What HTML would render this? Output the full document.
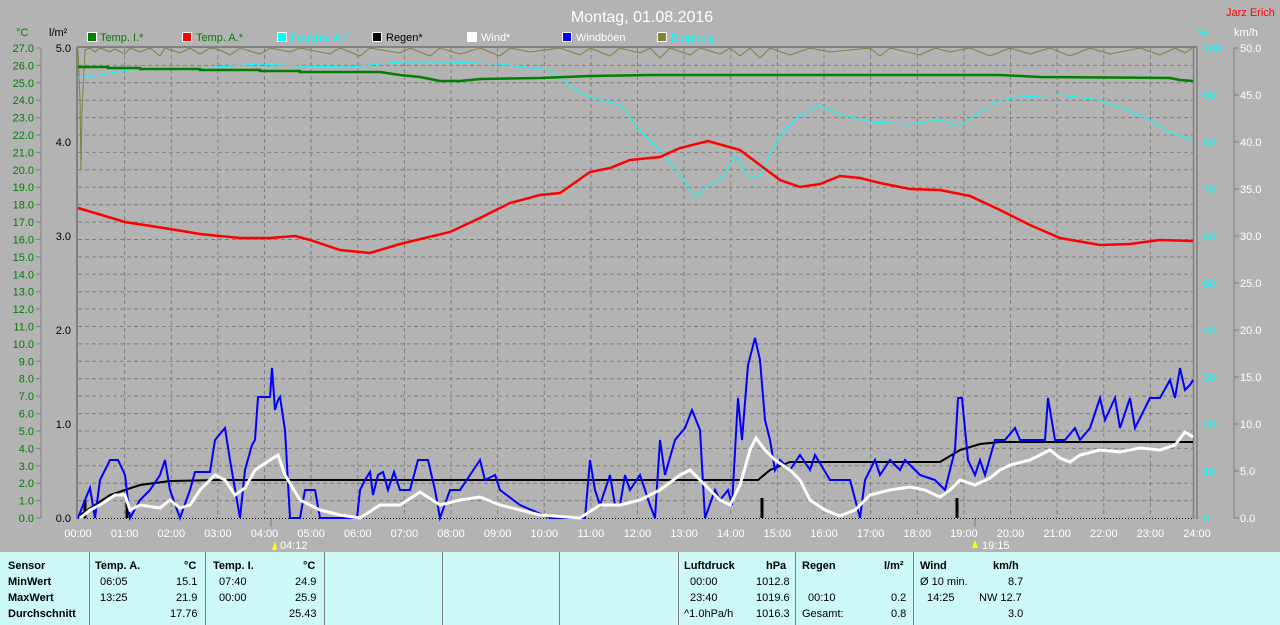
<!DOCTYPE html>
<html><head><meta charset="utf-8"><style>
html,body{margin:0;padding:0;background:#b3b3b3;width:1280px;height:625px;overflow:hidden}
svg{display:block;font-family:"Liberation Sans",sans-serif;font-size:11px}
.tb{position:absolute;left:0;top:552px;width:1280px;height:73px;background:#ccf8f5;font-family:"Liberation Sans",sans-serif;font-size:11px;color:#000}
.tb div{position:absolute;white-space:nowrap}
.b{font-weight:bold}
.sep{position:absolute;top:0;width:1px;height:73px;background:#808080}
</style></head><body>
<svg width="1280" height="552" viewBox="0 0 1280 552">
<rect width="1280" height="552" fill="#b3b3b3"/>
<text x="642" y="22" fill="#fff" font-size="16" text-anchor="middle">Montag, 01.08.2016</text>
<text x="1226" y="16" fill="#f00">Jarz Erich</text>
<!-- legend -->
<g font-size="11">
<rect x="87.5" y="32.5" width="9" height="9" fill="#008000" stroke="#fff"/><text x="100" y="41" fill="#008000">Temp. I.*</text>
<rect x="182.5" y="32.5" width="9" height="9" fill="#f00" stroke="#fff"/><text x="196" y="41" fill="#008000">Temp. A.*</text>
<rect x="277.5" y="32.5" width="9" height="9" fill="#0ff" stroke="#fff"/><text x="291" y="41" fill="#0ff">Feuchte A.*</text>
<rect x="372.5" y="32.5" width="9" height="9" fill="#000" stroke="#fff"/><text x="386" y="41" fill="#000">Regen*</text>
<rect x="467.5" y="32.5" width="9" height="9" fill="#fff" stroke="#fff"/><text x="481" y="41" fill="#fff">Wind*</text>
<rect x="562.5" y="32.5" width="9" height="9" fill="#00f" stroke="#fff"/><text x="576" y="41" fill="#fff">Windböen</text>
<rect x="657.5" y="32.5" width="9" height="9" fill="#808040" stroke="#fff"/><text x="671" y="41" fill="#0ff">Empfang</text>
</g>
<text x="16" y="36" fill="#008000">°C</text>
<text x="49" y="36" fill="#000">l/m²</text>
<text x="1198" y="36" fill="#0ff">%</text>
<text x="1234" y="36" fill="#fff">km/h</text>
<!-- grid -->
<g stroke="#808080" stroke-dasharray="4,3" stroke-width="1">
<path d="M78 500.6H1193M78 483.2H1193M78 465.8H1193M78 448.4H1193M78 431H1193M78 413.6H1193M78 396.1H1193M78 378.7H1193M78 361.3H1193M78 343.9H1193M78 326.5H1193M78 309.1H1193M78 291.7H1193M78 274.3H1193M78 256.9H1193M78 239.5H1193M78 222.1H1193M78 204.6H1193M78 187.2H1193M78 169.8H1193M78 152.4H1193M78 135H1193M78 117.6H1193M78 100.2H1193M78 82.8H1193M78 65.4H1193"/>
<path d="M124.6 48V518M171.3 48V518M217.9 48V518M264.5 48V518M311.1 48V518M357.8 48V518M404.4 48V518M451 48V518M497.6 48V518M544.3 48V518M590.9 48V518M637.5 48V518M684.1 48V518M730.8 48V518M777.4 48V518M824 48V518M870.6 48V518M917.3 48V518M963.9 48V518M1010.5 48V518M1057.1 48V518M1103.8 48V518M1150.4 48V518"/>
</g>
<!-- frame -->
<g stroke="#808080" fill="none">
<path d="M77 47H1197" stroke-width="2"/>
<path d="M77 47V519" stroke-width="2"/>
<path d="M1193.5 47V519M1197 47V519" stroke-width="1.5"/>
<path d="M41 48V518M36 48H41M36 65.4H41M36 82.8H41M36 100.2H41M36 117.6H41M36 135H41M36 152.4H41M36 169.8H41M36 187.2H41M36 204.6H41M36 222.1H41M36 239.5H41M36 256.9H41M36 274.3H41M36 291.7H41M36 309.1H41M36 326.5H41M36 343.9H41M36 361.3H41M36 378.7H41M36 396.1H41M36 413.6H41M36 431H41M36 448.4H41M36 465.8H41M36 483.2H41M36 500.6H41M36 518H41"/>
<path d="M1234 48V518M1234 48H1239M1234 95H1239M1234 142H1239M1234 189H1239M1234 236H1239M1234 283H1239M1234 330H1239M1234 377H1239M1234 424H1239M1234 471H1239M1234 518H1239"/>
<path d="M271 518V527M975 518V527"/>
</g>
<path d="M78 518.5H1193" stroke="#000" stroke-dasharray="1,2"/>
<!-- left labels -->
<g fill="#008000" text-anchor="end">
<text x="34" y="52">27.0</text><text x="34" y="69.4">26.0</text><text x="34" y="86.8">25.0</text><text x="34" y="104.2">24.0</text><text x="34" y="121.6">23.0</text><text x="34" y="139">22.0</text><text x="34" y="156.4">21.0</text><text x="34" y="173.8">20.0</text><text x="34" y="191.2">19.0</text><text x="34" y="208.6">18.0</text><text x="34" y="226.1">17.0</text><text x="34" y="243.5">16.0</text><text x="34" y="260.9">15.0</text><text x="34" y="278.3">14.0</text><text x="34" y="295.7">13.0</text><text x="34" y="313.1">12.0</text><text x="34" y="330.5">11.0</text><text x="34" y="347.9">10.0</text><text x="34" y="365.3">9.0</text><text x="34" y="382.7">8.0</text><text x="34" y="400.1">7.0</text><text x="34" y="417.6">6.0</text><text x="34" y="435">5.0</text><text x="34" y="452.4">4.0</text><text x="34" y="469.8">3.0</text><text x="34" y="487.2">2.0</text><text x="34" y="504.6">1.0</text><text x="34" y="522">0.0</text>
</g>
<g fill="#000" text-anchor="end">
<text x="71" y="52">5.0</text><text x="71" y="146">4.0</text><text x="71" y="240">3.0</text><text x="71" y="334">2.0</text><text x="71" y="428">1.0</text><text x="71" y="522">0.0</text>
</g>
<g fill="#0ff">
<text x="1203" y="52">100</text><text x="1203" y="99">90</text><text x="1203" y="146">80</text><text x="1203" y="193">70</text><text x="1203" y="240">60</text><text x="1203" y="287">50</text><text x="1203" y="334">40</text><text x="1203" y="381">30</text><text x="1203" y="428">20</text><text x="1203" y="475">10</text><text x="1203" y="522">0</text>
</g>
<g fill="#fff">
<text x="1240" y="52">50.0</text><text x="1240" y="99">45.0</text><text x="1240" y="146">40.0</text><text x="1240" y="193">35.0</text><text x="1240" y="240">30.0</text><text x="1240" y="287">25.0</text><text x="1240" y="334">20.0</text><text x="1240" y="381">15.0</text><text x="1240" y="428">10.0</text><text x="1240" y="475">5.0</text><text x="1240" y="522">0.0</text>
</g>
<g fill="#fff" text-anchor="middle">
<text x="78" y="537">00:00</text><text x="124.6" y="537">01:00</text><text x="171.3" y="537">02:00</text><text x="217.9" y="537">03:00</text><text x="264.5" y="537">04:00</text><text x="311.1" y="537">05:00</text><text x="357.8" y="537">06:00</text><text x="404.4" y="537">07:00</text><text x="451" y="537">08:00</text><text x="497.6" y="537">09:00</text><text x="544.3" y="537">10:00</text><text x="590.9" y="537">11:00</text><text x="637.5" y="537">12:00</text><text x="684.1" y="537">13:00</text><text x="730.8" y="537">14:00</text><text x="777.4" y="537">15:00</text><text x="824" y="537">16:00</text><text x="870.6" y="537">17:00</text><text x="917.3" y="537">18:00</text><text x="963.9" y="537">19:00</text><text x="1010.5" y="537">20:00</text><text x="1057.1" y="537">21:00</text><text x="1103.8" y="537">22:00</text><text x="1150.4" y="537">23:00</text><text x="1197" y="537">24:00</text>
</g>
<text x="280" y="549" fill="#fff">04:12</text>
<path d="M275 541l-3 9h5z" fill="#ff0"/>
<text x="982" y="549" fill="#fff">19:15</text>
<path d="M975 540l-3 8h6z" fill="#ff0"/>
<!-- Empfang -->
<polyline fill="none" stroke="#808040" stroke-width="1" points="78,50 80,100 81,170 82,110 83,90 85,50 90,48 95,52 100,48 110,52 115,49 125,54 130,48 140,52 150,48 160,56 165,48 180,53 190,48 200,54 210,48 220,50 230,55 240,48 260,54 270,48 290,52 300,48 330,54 340,48 360,56 370,48 400,53 410,48 430,56 440,48 460,54 480,48 500,56 510,48 530,52 560,48 580,55 590,48 610,56 620,48 640,53 650,48 660,58 670,48 690,55 700,48 720,54 730,48 740,56 750,48 760,58 770,48 790,55 810,48 830,52 870,48 880,56 890,48 920,55 935,48 950,52 970,48 990,56 1010,48 1030,54 1050,48 1070,56 1090,48 1110,54 1140,48 1160,55 1175,48 1185,53 1192,48"/>
<!-- Feuchte -->
<polyline fill="none" stroke="#0ff" stroke-width="1" points="78,78 100,75 140,68 200,68 260,64 300,66 350,67 400,62 450,62 500,64 550,70 580,93 600,100 620,105 640,130 660,150 680,175 695,197 710,185 725,175 735,155 740,165 750,178 760,175 780,135 800,115 820,106 840,114 870,122 910,124 940,120 960,126 980,112 1000,100 1020,97 1060,95 1100,100 1140,115 1170,132 1193,140"/>
<!-- Temp I -->
<polyline fill="none" stroke="#008000" stroke-width="2.5" points="78,67 108,67 108,68 140,68 140,69 200,69 200,70 260,70 260,71 300,71 300,72 380,72 400,75 420,77 440,81 460,81 480,79 540,78 590,76 650,75 1000,75 1040,77 1170,78 1180,80 1193,81"/>
<!-- Temp A -->
<polyline fill="none" stroke="#f00" stroke-width="2.5" points="78,208 125,222 170,229 200,234 240,238 270,238 295,236 310,240 340,250 370,253 400,244 450,232 480,218 510,203 540,195 560,193 590,172 610,168 630,160 660,157 680,148 708,141 740,150 760,165 780,180 800,187 820,184 840,176 860,178 880,183 910,189 940,190 970,196 1000,210 1030,225 1060,238 1100,245 1130,244 1160,240 1193,241"/>
<!-- Rain bars -->
<g stroke="#000" stroke-width="3"><path d="M85 500V518M127 500V518M762 498V518M957 498V518"/></g>
<!-- Regen cumulative -->
<polyline fill="none" stroke="#000" stroke-width="2" points="80,515 95,505 110,495 125,490 140,485 170,481 220,480 758,480 770,470 790,462 940,462 960,450 980,444 1000,442 1193,442"/>
<!-- Windboeen -->
<polyline fill="none" stroke="#00f" stroke-width="2" points="78,518 85,500 90,488 95,518 100,480 105,470 110,460 118,460 125,475 130,518 140,500 150,490 160,475 165,460 170,490 180,518 190,490 195,472 210,472 215,440 225,428 230,460 240,518 245,470 252,445 255,440 258,397 270,397 272,368 275,410 278,400 280,397 285,430 290,518 300,518 305,490 315,490 320,518 357,518 360,490 365,480 370,472 373,495 378,475 383,472 388,490 394,472 400,490 410,490 418,460 428,460 435,490 440,518 450,490 460,490 470,475 480,460 485,480 495,475 500,490 520,505 550,518 585,518 590,460 595,490 600,505 610,475 615,505 620,505 625,475 630,490 640,475 650,505 655,518 660,440 665,475 675,440 685,428 692,410 700,430 705,518 715,490 720,500 728,490 732,505 738,398 742,440 748,365 755,338 760,360 765,420 770,440 775,470 780,460 790,470 800,455 810,470 815,455 830,480 850,480 860,518 865,480 875,460 880,475 890,460 900,470 905,460 920,475 935,480 945,490 955,450 958,398 962,398 968,460 975,475 980,460 985,475 995,440 1005,440 1015,428 1020,440 1045,440 1048,398 1055,440 1065,440 1075,428 1080,440 1090,428 1100,398 1105,420 1115,398 1120,428 1130,398 1135,428 1150,398 1160,398 1170,380 1175,398 1180,368 1185,390 1190,385 1193,380"/>
<!-- Wind -->
<polyline fill="none" stroke="#fff" stroke-width="3" points="80,518 90,510 100,505 115,495 125,495 130,510 140,505 160,508 170,500 180,508 190,505 200,490 215,475 225,480 235,495 245,488 255,470 270,460 278,455 285,475 300,500 320,510 340,515 360,518 380,505 400,505 420,492 440,505 460,500 480,497 500,505 520,510 540,515 580,518 600,505 620,505 640,500 660,490 680,475 690,470 700,480 720,500 730,505 740,485 750,450 756,438 765,450 775,460 790,470 800,480 810,500 825,510 840,516 855,510 870,495 890,490 910,487 925,490 940,497 950,490 960,480 975,485 990,478 1000,470 1010,465 1030,460 1050,450 1060,458 1070,462 1080,455 1100,450 1120,452 1140,448 1160,450 1175,445 1185,432 1193,437"/>
</svg>
<div class="tb">
<div class="sep" style="left:89px"></div><div class="sep" style="left:205px"></div><div class="sep" style="left:324px"></div><div class="sep" style="left:442px"></div><div class="sep" style="left:559px"></div><div class="sep" style="left:678px"></div><div class="sep" style="left:795px"></div><div class="sep" style="left:913px"></div>
<div class="b" style="left:8px;top:8px">Sensor</div>
<div class="b" style="left:8px;top:24px">MinWert</div>
<div class="b" style="left:8px;top:40px">MaxWert</div>
<div class="b" style="left:8px;top:56px">Durchschnitt</div>
<div class="b" style="left:95px;top:8px">Temp. A.</div><div class="b" style="left:184px;top:8px">°C</div>
<div style="left:100px;top:24px">06:05</div><div style="left:176px;top:24px">15.1</div>
<div style="left:100px;top:40px">13:25</div><div style="left:176px;top:40px">21.9</div>
<div style="left:170px;top:56px">17.76</div>
<div class="b" style="left:213px;top:8px">Temp. I.</div><div class="b" style="left:303px;top:8px">°C</div>
<div style="left:219px;top:24px">07:40</div><div style="left:295px;top:24px">24.9</div>
<div style="left:219px;top:40px">00:00</div><div style="left:295px;top:40px">25.9</div>
<div style="left:289px;top:56px">25.43</div>
<div class="b" style="left:684px;top:8px">Luftdruck</div><div class="b" style="left:766px;top:8px">hPa</div>
<div style="left:690px;top:24px">00:00</div><div style="left:756px;top:24px">1012.8</div>
<div style="left:690px;top:40px">23:40</div><div style="left:756px;top:40px">1019.6</div>
<div style="left:684px;top:56px">^1.0hPa/h</div><div style="left:756px;top:56px">1016.3</div>
<div class="b" style="left:802px;top:8px">Regen</div><div class="b" style="left:884px;top:8px">l/m²</div>
<div style="left:808px;top:40px">00:10</div><div style="left:891px;top:40px">0.2</div>
<div style="left:802px;top:56px">Gesamt:</div><div style="left:891px;top:56px">0.8</div>
<div class="b" style="left:920px;top:8px">Wind</div><div class="b" style="left:993px;top:8px">km/h</div>
<div style="left:920px;top:24px">Ø 10 min.</div><div style="left:1008px;top:24px">8.7</div>
<div style="left:927px;top:40px">14:25</div><div style="left:979px;top:40px">NW 12.7</div>
<div style="left:1008px;top:56px">3.0</div>
</div>
</body></html>
